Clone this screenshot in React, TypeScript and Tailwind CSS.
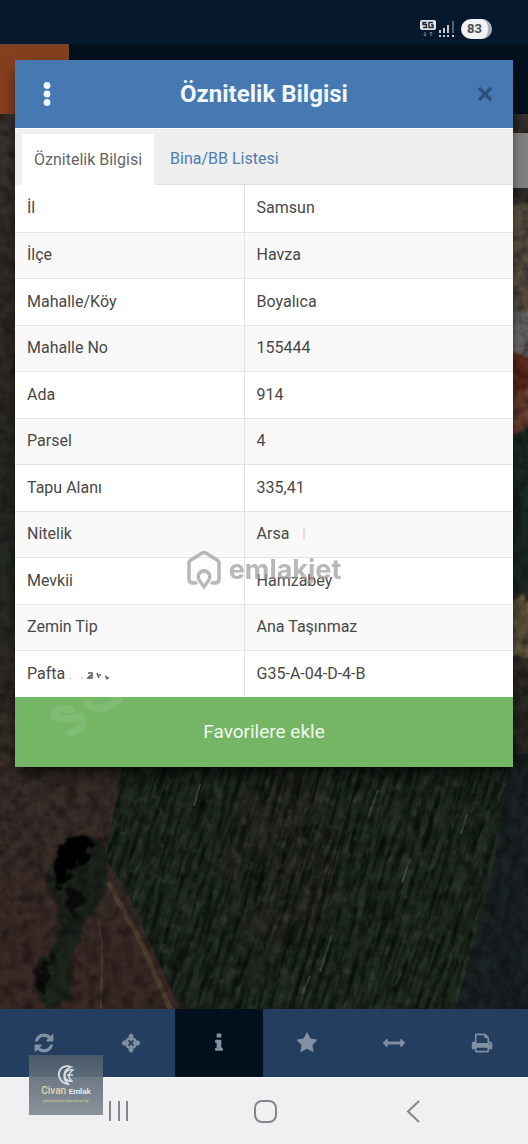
import { useState } from "react";

interface Row { label: string; value: string }

const ROWS: Row[] = [
  { label: "İl", value: "Samsun" },
  { label: "İlçe", value: "Havza" },
  { label: "Mahalle/Köy", value: "Boyalıca" },
  { label: "Mahalle No", value: "155444" },
  { label: "Ada", value: "914" },
  { label: "Parsel", value: "4" },
  { label: "Tapu Alanı", value: "335,41" },
  { label: "Nitelik", value: "Arsa" },
  { label: "Mevkii", value: "Hamzabey" },
  { label: "Zemin Tip", value: "Ana Taşınmaz" },
  { label: "Pafta", value: "G35-A-04-D-4-B" },
];

const TABS = ["Öznitelik Bilgisi", "Bina/BB Listesi"];

const TOOLS = [
  {
    name: "Yenile",
    d: "M1639 1056q0 5-1 7-64 268-268 434.5t-478 166.500q-146 0-282.500-55t-243.500-157l-129 129q-19 19-45 19t-45-19-19-45v-448q0-26 19-45t45-19h448q26 0 45 19t19 45-19 45l-137 137q71 66 161 102t187 36q134 0 250-65t186-179q11-17 53-117 8-23 30-23h192q13 0 22.500 9.500t9.500 22.500zm25-800v448q0 26-19 45t-45 19h-448q-26 0-45-19t-19-45 19-45l138-138q-148-137-349-137-134 0-250 65t-186 179q-11 17-53 117-8 23-30 23h-199q-13 0-22.500-9.500t-9.500-22.500v-7q65-268 270-434.500t480-166.500q146 0 284 55.500t245 156.500l130-129q19-19 45-19t45 19 19 45z",
  },
  {
    name: "Konum",
    d: "M896 90l270 270h-110v60q230 60 300 300h60V610l270 286-270 286v-110h-60q-70 240-300 300v60h110L896 1702 626 1432h110v-60q-230-60-300-300h-60v110L106 896l270-286v110h60q70-240 300-300v-60H626zM736 640l-96 96 160 160-160 160 96 96 160-160 160 160 96-96-160-160 160-160-96-96-160 160z",
  },
  {
    name: "Bilgi",
    d: "M1216 1344v128q0 26-19 45t-45 19h-512q-26 0-45-19t-19-45v-128q0-26 19-45t45-19h64v-384h-64q-26 0-45-19t-19-45v-128q0-26 19-45t45-19h384q26 0 45 19t19 45v576h64q26 0 45 19t19 45zm-128-1152v192q0 26-19 45t-45 19h-256q-26 0-45-19t-19-45v-192q0-26 19-45t45-19h256q26 0 45 19t19 45z",
  },
  {
    name: "Favoriler",
    d: "M1728 647q0 22-26 48l-363 354 86 500q1 7 1 20 0 21-10.500 35.500t-30.500 14.500q-19 0-40-12l-449-236-449 236q-22 12-40 12-21 0-31.500-14.500t-10.500-35.500q0-6 2-20l86-500-364-354q-25-27-25-48 0-37 56-46l502-73 225-455q19-41 49-41t49 41l225 455 502 73q56 9 56 46z",
  },
  {
    name: "Ölç",
    d: "M1792 896q0 26-19 45l-256 256q-19 19-45 19t-45-19-19-45v-128h-1024v128q0 26-19 45t-45 19-45-19l-256-256q-19-19-19-45t19-45l256-256q19-19 45-19t45 19 19 45v128h1024v-128q0-26 19-45t45-19 45 19l256 256q19 19 19 45z",
  },
  {
    name: "Yazdır",
    d: "M448 1536h896v-256h-896v256zm0-640h896v-384h-160q-40 0-68-28t-28-68v-160h-640v640zm1152 64q0-26-19-45t-45-19-45 19-19 45 19 45 45 19 45-19 19-45zm128 0v416q0 13-9.500 22.500t-22.500 9.500h-224v160q0 40-28 68t-68 28h-960q-40 0-68-28t-28-68v-160h-224q-13 0-22.500-9.500t-9.500-22.500v-416q0-79 56.500-135.500t135.500-56.500h64v-544q0-40 28-68t68-28h672q40 0 88 20t76 48l152 152q28 28 48 76t20 88v256h64q79 0 135.500 56.500t56.500 135.500z",
  },
];

function SatelliteMap() {
  return (
    <svg className="absolute inset-0 h-full w-full" viewBox="0 0 528 895" preserveAspectRatio="xMidYMid slice" aria-hidden="true">
      <defs>
        <filter id="soil" x="0" y="0" width="100%" height="100%">
          <feTurbulence type="fractalNoise" baseFrequency="0.09" numOctaves="4" seed="4" />
          <feColorMatrix values="0 0 0 0 0  0 0 0 0 0  0 0 0 0 0  1.6 0 0 0 -0.55" />
        </filter>
        <filter id="furrow" x="0" y="0" width="100%" height="100%">
          <feTurbulence type="fractalNoise" baseFrequency="0.2 0.02" numOctaves="4" seed="9" />
          <feColorMatrix values="0 0 0 0 0.002  0 0 0 0 0.005  0 0 0 0 0.003  3 0 0 0 -1.2" />
        </filter>
        <filter id="speck" x="0" y="0" width="100%" height="100%">
          <feTurbulence type="fractalNoise" baseFrequency="0.16 0.09" numOctaves="3" seed="21" />
          <feColorMatrix values="0 0 0 0 0.05  0 0 0 0 0.06  0 0 0 0 0.045  0 3 0 0 -1.6" />
        </filter>
        <filter id="rough" x="-20%" y="-20%" width="140%" height="140%">
          <feTurbulence type="fractalNoise" baseFrequency="0.1" numOctaves="3" seed="2" />
          <feDisplacementMap in="SourceGraphic" scale="16" />
          <feGaussianBlur stdDeviation="1" />
        </filter>
        <clipPath id="field">
          <path d="M124 640H528V895H180L128 780L106 744Z" />
        </clipPath>
        <linearGradient id="ground" x1="0" y1="0" x2="0" y2="1">
          <stop offset="0" stopColor="#39332f" />
          <stop offset="0.3" stopColor="#2f2b27" />
          <stop offset="0.5" stopColor="#262a24" />
          <stop offset="0.72" stopColor="#382e2a" />
          <stop offset="1" stopColor="#3a2925" />
        </linearGradient>
      </defs>
      <rect width="528" height="895" fill="url(#ground)" />
      <g filter="url(#rough)">
        <path d="M505 90h40v120h-40z" fill="#5a5042" />
        <path d="M505 196h40v44h-40z" fill="#6a6866" />
        <path d="M505 240h40v36h-40z" fill="#5c2a1e" />
        <path d="M505 276h40v40h-40z" fill="#6c4030" />
        <path d="M505 318h40v160h-40z" fill="#1d2b20" />
        <path d="M505 485h40v60h-40z" fill="#64583f" />
        <path d="M505 570h40v90h-40z" fill="#2a2b25" />
      </g>
      <path d="M124 640H528V895H180L128 780L106 744Z" fill="#222d22" />
      <g clipPath="url(#field)">
        <ellipse cx="280" cy="745" rx="60" ry="90" fill="#2d2a23" opacity="0.5" />
        <g transform="rotate(17 300 770)">
          <rect x="40" y="540" width="540" height="470" filter="url(#furrow)" opacity="0.8" />
          <rect x="40" y="540" width="540" height="470" filter="url(#speck)" opacity="0.6" />
        </g>
        <path d="M365 640L292 895M325 640L312 690" stroke="#0b120c" strokeWidth="1.5" opacity="0.7" />
        <path d="M511 640H528V895H455L490 772Z" fill="#1a2124" opacity="0.8" />
        <path d="M378 676l-10 28M332 820l-12 38M310 862l-8 18M410 745l-8 24M200 670l-6 22M467 700l-6 20" stroke="#424940" strokeWidth="2" />
      </g>
      <g filter="url(#rough)">
        <path d="M62 730l22-8 18 4 4 24 0 30-20 28-14 30-16-2 4-40-14-30z" fill="#1e231d" />
        <path d="M56 735l20-14 18 6-10 22-22 18-6 14z" fill="#050606" />
        <path d="M66 775l18 4-8 28-12-18z" fill="#0a0b0a" />
        <path d="M42 845l18-14 12 8 2 40-28 18-10-24z" fill="#1b271a" />
        <path d="M42 850l14-10-14 40-10-14z" fill="#080a08" />
      </g>
      <path d="M108 768L142 830L170 895" fill="none" stroke="#5d4d34" strokeWidth="5" opacity="0.6" />
      <path d="M98 805l4 25-1 65" fill="none" stroke="#624a3d" strokeWidth="2" opacity="0.6" />
      <rect width="528" height="895" filter="url(#soil)" opacity="0.5" />
      <rect x="511" y="19" width="17" height="55" fill="#828282" />
    </svg>
  );
}

function StatusBar() {
  return (
    <div className="flex h-11 items-start justify-end bg-[#06182b] pt-[19px] pr-9 pl-4">
      <svg className="mr-1.5 h-5 w-9" viewBox="0 0 36 20" aria-hidden="true">
        <rect x="1" y="1" width="16" height="10" rx="2" fill="#e2e5e8" />
        <path d="M7.500 3.500H4v2h3.500v3H4M14 3.500h-4v5h4V6h-2" fill="none" stroke="#182637" strokeWidth="1.400" />
        <path d="M6 13v4m-1.500-1.500L6 17l1.500-1.500M12 17v-4m-1.500 1.500L12 13l1.500 1.500" fill="none" stroke="#75808c" />
        <g stroke="#c3c9cf" strokeWidth="2">
          <path d="M21 14v-3M25 14V9M29 14V6" />
          <path d="M34 14V2" stroke="#526171" />
          <path d="M20 17h2M24 17h2M28 17h2M33 17h2" />
        </g>
      </svg>
      <span className="flex h-5 w-[31px] items-center justify-center rounded-full border-r-4 border-[#aeb3b8] bg-[#f1f2f3] text-[13px] font-bold text-[#4a4f55]">83</span>
    </div>
  );
}

function BrandWatermark() {
  return (
    <div className="pointer-events-none absolute inset-0 flex items-center justify-center gap-2 pb-1 text-[#9b9b9b] opacity-70">
      <svg className="h-10 w-[34px]" viewBox="0 0 34 40" aria-hidden="true">
        <path d="M9 33H6q-4 0-4-4V13q0-2 2-3L15 3q2-1 4 0l11 7q2 1 2 3v16q0 4-4 4h-3" fill="none" stroke="currentColor" strokeWidth="3.500" strokeLinecap="round" />
        <path fillRule="evenodd" d="M17 19a7.500 7.500 0 0 1 7.500 7.500C24.500 31 19 36 17 40C15 36 9.500 31 9.500 26.500A7.500 7.500 0 0 1 17 19zm0 4a4 4 0 0 0-4 4c0 2 2 4 4 7c2-3 4-5 4-7a4 4 0 0 0-4-4z" fill="currentColor" />
      </svg>
      <span className="font-['Inter'] text-[27px] leading-8 font-bold">emlakjet</span>
    </div>
  );
}

function AgencyBadge() {
  return (
    <div className="pointer-events-none absolute bottom-[29px] left-[29px] flex h-[60px] w-[74px] flex-col items-center bg-linear-to-b from-[#4d5c6b]/90 to-[#858e96]/95 pt-2.5">
      <svg className="h-5 w-5" viewBox="0 0 20 20" fill="none" stroke="#d9dee2" aria-hidden="true">
        <path d="M15 2C8-1 2 4 3 11c1 5 5 8 9 8C7 14 6 5 15 2z" strokeWidth="1.800" />
        <path d="M17 5C11 4 8 8 9 12c1 3 4 5 7 4-4-3-5-6 1-11zM11 10h6" strokeWidth="1.500" />
      </svg>
      <span className="text-[10px] leading-3 font-medium text-[#e0d8b4]">Civan <span className="text-[8px] font-bold text-[#e6e8ea]">Emlak</span></span>
      <span className="text-[4px] leading-[6px] text-[#d8cfa5]">gayrimenkul danışmanlığı</span>
    </div>
  );
}

export default function App() {
  const [tab, setTab] = useState(0);
  const [tool, setTool] = useState(2);

  return (
    <div className="relative flex min-h-screen flex-col overflow-hidden bg-[#01101c] font-['Roboto',sans-serif]">
      <StatusBar />
      <div className="flex h-[70px] bg-[#01101c]">
        <div className="w-[69px] border-t border-[#5e4637] bg-[#833f1e]" />
      </div>
      <main className="relative flex-1">
        <SatelliteMap />
      </main>

      <nav className="grid h-[68px] grid-cols-6 bg-[#233e5f] pr-0.5">
        {TOOLS.map((t, i) => (
          <button key={t.name} aria-label={t.name} onClick={() => setTool(i)}
            className={`flex items-center justify-center ${tool === i ? "bg-[#02101c]" : ""}`}>
            <svg className="h-[22px] w-[22px] fill-[#8290a3]" viewBox="0 0 1792 1792" fillRule="evenodd">
              <path d={t.d} />
            </svg>
          </button>
        ))}
      </nav>
      <nav className="flex h-[67px] items-center justify-between border-t border-white bg-[#f0f0f2] px-[102px]">
        <button aria-label="Son uygulamalar">
          <svg className="h-8 w-8" viewBox="0 0 32 32" fill="none" stroke="#85858a" strokeWidth="2">
            <path d="M8 6v20M17 6v20M25 6v20" />
          </svg>
        </button>
        <button aria-label="Ana ekran">
          <svg className="h-8 w-8" viewBox="0 0 32 32" fill="none" stroke="#85858a" strokeWidth="2">
            <rect x="7" y="6" width="21" height="21" rx="7" />
          </svg>
        </button>
        <button aria-label="Geri">
          <svg className="h-8 w-8" viewBox="0 0 32 32" fill="none" stroke="#85858a" strokeWidth="2">
            <path d="M25 6L14 16.500L25 27" />
          </svg>
        </button>
      </nav>

      <section role="dialog" aria-labelledby="dialog-title" className="absolute inset-x-[15px] top-[60px] bg-white shadow-lg shadow-black/60">
        <header className="flex h-[68px] items-center justify-between bg-[#4678b2] px-4">
          <button aria-label="Menü" className="flex w-8 justify-center">
            <svg className="h-6 w-2" viewBox="0 0 8 24" fill="#eef8ff">
              <circle cx="4" cy="3.500" r="3.400" />
              <circle cx="4" cy="12" r="3.400" />
              <circle cx="4" cy="20.500" r="3.400" />
            </svg>
          </button>
          <h1 id="dialog-title" className="text-2xl font-bold text-[#f0f7fd]">Öznitelik Bilgisi</h1>
          <button aria-label="Kapat" className="flex w-8 justify-end pr-1">
            <svg className="h-4 w-4" viewBox="0 0 16 16" stroke="#2c5079" strokeWidth="3.500">
              <path d="M2 2l12 12M14 2L2 14" />
            </svg>
          </button>
        </header>

        <div className="flex h-[57px] border-t border-white bg-[#efefef] pt-[5px] pl-[7px]">
          {TABS.map((t, i) => (
            <button key={t} onClick={() => setTab(i)}
              className={`px-3 text-base ${i === 0 ? "mr-1" : ""} ${tab === i ? "bg-white text-[#666]" : "border-b border-[#ddd] text-[#4d7daf]"}`}>
              {t}
            </button>
          ))}
          <div className="flex-1 border-b border-[#ddd]" />
        </div>

        <table className="w-full table-fixed border-collapse text-base text-[#484848]">
          <tbody>
            {ROWS.map(r => (
              <tr key={r.label} className="h-[47px] border-b border-[#e4e4e4] bg-white last:border-b-0 even:h-[46px] even:bg-[#f9f9f9]">
                <th scope="row" className="w-[46%] border-r border-[#e4e4e4] px-3 text-left font-normal">
                  {r.label}
                  {r.label === "Pafta" && (
                    <svg className="ml-1 inline h-3 w-11" viewBox="0 0 44 12" fill="none" stroke="#55595c" strokeWidth="1.500" aria-hidden="true">
                      <path d="M1 10l1-1M12 9h2" stroke="#c4c4c4" />
                      <path d="M19 4h4v5h-4l3-3M28 4l2 5M31 5v2M36 7l3 2-2 1" />
                    </svg>
                  )}
                </th>
                <td className="px-3">
                  {r.value}
                  {r.value === "Arsa" && <span className="ml-3.5 inline-block h-3 w-0.5 bg-[#dedede]" />}
                </td>
              </tr>
            ))}
          </tbody>
        </table>

        <button className="relative flex h-[70px] w-full items-center justify-center overflow-hidden bg-[#74b666] text-[19px] text-[#f3fbef]">
          <svg className="absolute top-0 left-8 h-12 w-20" viewBox="0 0 80 48" fill="none" stroke="#84be77" strokeWidth="8" strokeLinecap="round" aria-hidden="true">
            <path d="M24 13Q4 8 8 20Q22 24 34 20Q40 30 24 36M40 6Q54 18 72 2" opacity="0.7" />
          </svg>
          Favorilere ekle
        </button>
      </section>

      <BrandWatermark />
      <AgencyBadge />
    </div>
  );
}
